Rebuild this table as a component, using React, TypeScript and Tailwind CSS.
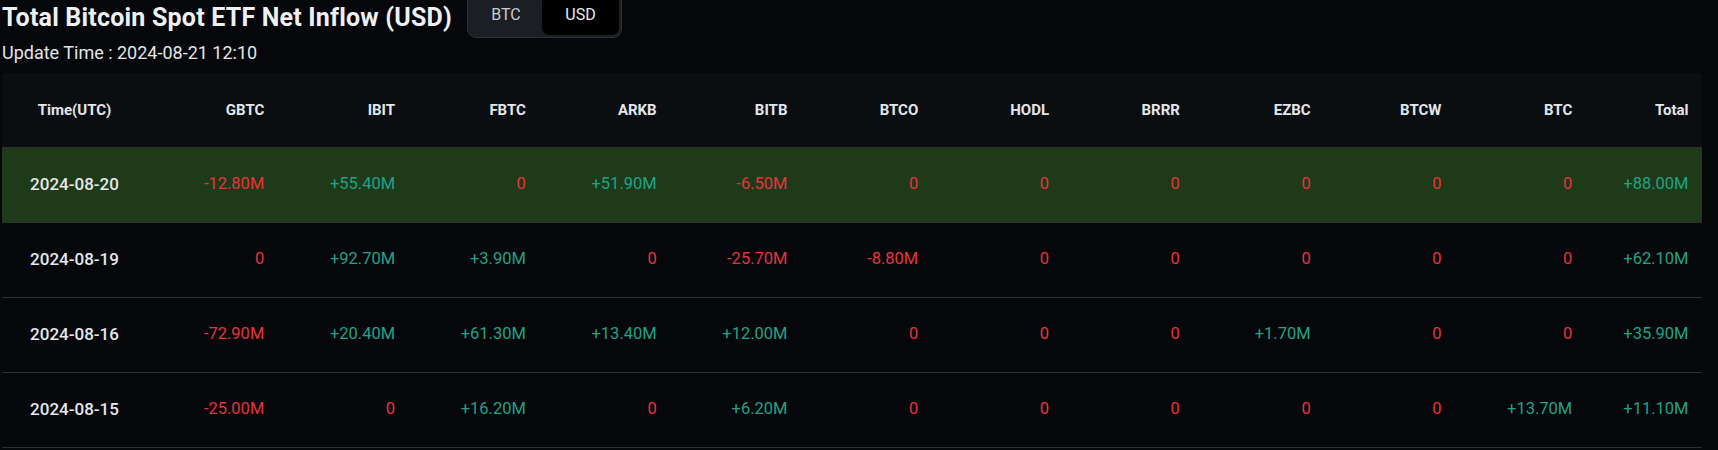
import React from "react";

const cols = ["GBTC", "IBIT", "FBTC", "ARKB", "BITB", "BTCO", "HODL", "BRRR", "EZBC", "BTCW", "BTC", "Total"];

const rows: { date: string; vals: string[]; hl?: boolean }[] = [
  { date: "2024-08-20", hl: true, vals: ["-12.80M", "+55.40M", "0", "+51.90M", "-6.50M", "0", "0", "0", "0", "0", "0", "+88.00M"] },
  { date: "2024-08-19", vals: ["0", "+92.70M", "+3.90M", "0", "-25.70M", "-8.80M", "0", "0", "0", "0", "0", "+62.10M"] },
  { date: "2024-08-16", vals: ["-72.90M", "+20.40M", "+61.30M", "+13.40M", "+12.00M", "0", "0", "0", "+1.70M", "0", "0", "+35.90M"] },
  { date: "2024-08-15", vals: ["-25.00M", "0", "+16.20M", "0", "+6.20M", "0", "0", "0", "0", "0", "+13.70M", "+11.10M"] },
];

const grid = "grid grid-cols-[145px_repeat(11,130.8px)_1fr]";

export default function App() {
  return (
    <div
      className="w-[1718px] h-[450px] overflow-hidden bg-[#05070a] pl-[2px]"
      style={{ fontFamily: "Roboto, 'Liberation Sans', sans-serif" }}
    >
      <div className="flex items-start">
        <h1 className="mt-[3px] text-[25px] leading-[30px] font-bold text-[#eef0f3] tracking-[0.2px]">
          Total Bitcoin Spot ETF Net Inflow (USD)
        </h1>
        <div className="-mt-[8px] ml-[15px] flex h-[46px] w-[155px] rounded-[9px] border border-[#2c3037] bg-[#1b1e23] p-[2px]">
          <div className="flex flex-1 items-center justify-center text-[16px] text-[#c9ccd2]">BTC</div>
          <div className="flex w-[77px] items-center justify-center rounded-[7px] bg-black text-[16px] text-[#e8eaed]">USD</div>
        </div>
      </div>
      <div className="mt-[4px] text-[18px] leading-[22px] text-[#e3e5e8]">Update Time : 2024-08-21 12:10</div>
      <div className="mt-[9px] w-[1700px]">
        <div className={`${grid} h-[74.5px] items-center border-b border-[#2b2f36] bg-[#0b0e11] text-[15px] font-bold text-[#e4e6ea]`}>
          <div className="text-center">Time(UTC)</div>
          {cols.map((c) => (
            <div key={c} className="pr-[13.5px] text-right">
              {c}
            </div>
          ))}
        </div>
        {rows.map((r) => (
          <div
            key={r.date}
            className={`${grid} h-[75px] items-center border-b border-[#2b2f36] ${r.hl ? "bg-[#1e3a18]" : "bg-[#05070a]"}`}
          >
            <div className="text-center text-[17px] font-medium text-[#e6e8eb]">{r.date}</div>
            {r.vals.map((v, i) => (
              <div
                key={i}
                className={`pr-[13.5px] text-right text-[16.5px] ${v.startsWith("+") ? "text-[#22a287]" : "text-[#e6343f]"}`}
              >
                {v}
              </div>
            ))}
          </div>
        ))}
      </div>
    </div>
  );
}
